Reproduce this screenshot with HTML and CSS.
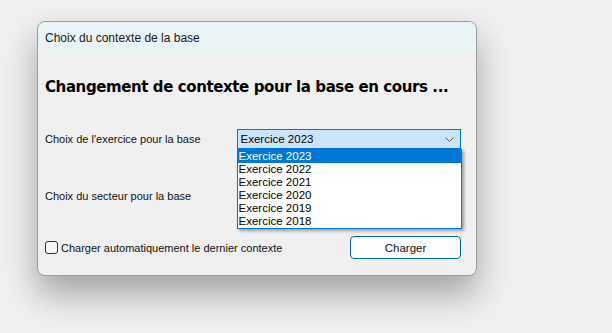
FILE: index.html
```html
<!DOCTYPE html>
<html lang="fr">
<head>
  <meta charset="UTF-8" />
  <title>Choix du contexte de la base</title>
  <link rel="stylesheet" href="styles.css">
</head>
<body>
  <div class="window">
    <div class="titleBar">Choix du contexte de la base</div>

    <div class="content">
      <h1>Changement de contexte pour la base en cours ...</h1>

      <div class="row rowExercice">
        <label class="label">Choix de l'exercice pour la base</label>
        <div class="combo">
          <div class="comboBox">
            <span>Exercice 2023</span>
            <svg class="chevron" width="9" height="5" viewBox="0 0 9 5">
              <path d="M0.5 0.5 L4.5 4.5 L8.5 0.5" fill="none" stroke="#606060" stroke-width="1"/>
            </svg>
          </div>
          <ul class="comboList">
            <li class="selected">Exercice 2023</li>
            <li>Exercice 2022</li>
            <li>Exercice 2021</li>
            <li>Exercice 2020</li>
            <li>Exercice 2019</li>
            <li>Exercice 2018</li>
          </ul>
        </div>
      </div>

      <div class="row rowSecteur">
        <label class="label">Choix du secteur pour la base</label>
      </div>

      <div class="footer">
        <label class="check">
          <span class="box"></span>
          Charger automatiquement le dernier contexte
        </label>
        <button class="btn">Charger</button>
      </div>
    </div>
  </div>
</body>
</html>
```

FILE: styles.css
```css
* {
  box-sizing: border-box;
  margin: 0;
  padding: 0;
}

body {
  background-color: #f0f0f0;
  font-family: "Liberation Sans", Arial, sans-serif;
  font-size: 11px;
  color: #000;
  padding: 21px 0 0 37px;
  height: 333px;
  overflow: hidden;
}

.window {
  width: 440px;
  height: 255px;
  background-color: #f0f0f0;
  border: 1px solid #9c9c9c;
  border-radius: 8px;
  box-shadow: 0 18px 34px rgba(0, 0, 0, 0.32);
  display: flex;
  flex-direction: column;
}

.titleBar {
  height: 30px;
  background-color: #eaf4f7;
  border-radius: 8px 8px 0 0;
  padding: 9px 0 0 7px;
  font-size: 12px;
  color: #1a1a1a;
}

.content {
  padding: 0 15px 0 7px;
  display: flex;
  flex-direction: column;
}

h1 {
  font-family: "DejaVu Sans", Verdana, sans-serif;
  font-size: 15px;
  font-weight: bold;
  margin-top: 26px;
  height: 20px;
  letter-spacing: -0.4px;
}

.row {
  display: flex;
  align-items: center;
}

.rowExercice {
  margin-top: 31px;
  height: 20px;
}

.label {
  width: 192px;
  color: #111;
}

.combo {
  position: relative;
  width: 225px;
}

.comboBox {
  height: 20px;
  background-color: #cce4f7;
  border: 1px solid #0078d7;
  display: flex;
  align-items: center;
  justify-content: space-between;
  padding: 0 6px 0 3px;
  font-size: 11.5px;
}

.comboList {
  position: absolute;
  top: 20px;
  left: 0;
  width: 225px;
  list-style: none;
  background-color: #fff;
  border: 1px solid #0078d7;
  box-shadow: 2px 2px 3px rgba(0, 0, 0, 0.35);
  z-index: 2;
  font-size: 11.5px;
}

.comboList li {
  height: 13px;
  line-height: 13px;
  padding-left: 1px;
}

.comboList .selected {
  background-color: #0078d7;
  color: #fff;
}

.rowSecteur {
  margin-top: 37px;
  height: 20px;
}

.footer {
  margin-top: 30px;
  display: flex;
  align-items: center;
  justify-content: space-between;
}

.check {
  display: flex;
  align-items: center;
  gap: 3px;
  color: #111;
}

.box {
  width: 13px;
  height: 13px;
  border: 1px solid #333;
  border-radius: 3px;
  background-color: #f7f7f7;
}

.btn {
  width: 111px;
  height: 23px;
  font-family: "Liberation Sans", Arial, sans-serif;
  font-size: 11.5px;
  background-color: #fdfdfd;
  border: 1px solid #0067c0;
  border-radius: 4px;
  color: #111;
}
```
